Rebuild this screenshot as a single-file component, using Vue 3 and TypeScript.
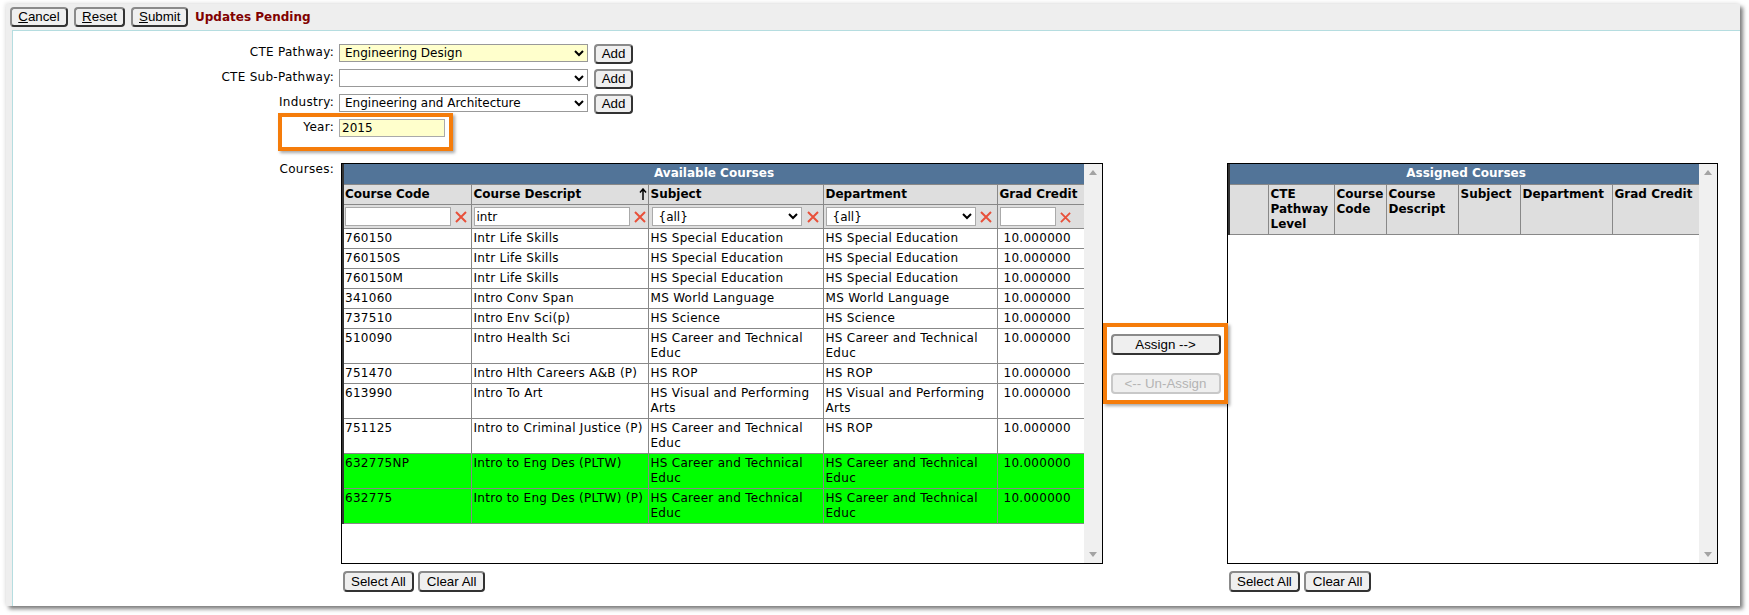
<script setup lang="ts">
interface Course {
  code: string;
  descript: string;
  subject: string;
  department: string;
  match?: boolean;
}

const courses: Course[] = [
  { code: "760150", descript: "Intr Life Skills", subject: "HS Special Education", department: "HS Special Education" },
  { code: "760150S", descript: "Intr Life Skills", subject: "HS Special Education", department: "HS Special Education" },
  { code: "760150M", descript: "Intr Life Skills", subject: "HS Special Education", department: "HS Special Education" },
  { code: "341060", descript: "Intro Conv Span", subject: "MS World Language", department: "MS World Language" },
  { code: "737510", descript: "Intro Env Sci(p)", subject: "HS Science", department: "HS Science" },
  { code: "510090", descript: "Intro Health Sci", subject: "HS Career and Technical Educ", department: "HS Career and Technical Educ" },
  { code: "751470", descript: "Intro Hlth Careers A&B (P)", subject: "HS ROP", department: "HS ROP" },
  { code: "613990", descript: "Intro To Art", subject: "HS Visual and Performing Arts", department: "HS Visual and Performing Arts" },
  { code: "751125", descript: "Intro to Criminal Justice (P)", subject: "HS Career and Technical Educ", department: "HS ROP" },
  { code: "632775NP", descript: "Intro to Eng Des (PLTW)", subject: "HS Career and Technical Educ", department: "HS Career and Technical Educ", match: true },
  { code: "632775", descript: "Intro to Eng Des (PLTW) (P)", subject: "HS Career and Technical Educ", department: "HS Career and Technical Educ", match: true },
];

const assignedCols = ["", "CTE Pathway Level", "Course Code", "Course Descript", "Subject", "Department", "Grad Credit"];
const assignedWidths = [39, 66, 52, 72, 62, 92, 90];
</script>

<template>
  <div class="page">
    <div class="frame">
      <div class="toolbar">
        <button type="button" class="btn cancel"><u>C</u>ancel</button>
        <button type="button" class="btn reset"><u>R</u>eset</button>
        <button type="button" class="btn submit"><u>S</u>ubmit</button>
        <span class="pending">Updates Pending</span>
      </div>

      <div class="panel">
        <div class="field">
          <label>CTE Pathway:</label>
          <select class="sel required"><option>Engineering Design</option></select>
          <button type="button" class="btn add">Add</button>
        </div>
        <div class="field">
          <label>CTE Sub-Pathway:</label>
          <select class="sel"><option></option></select>
          <button type="button" class="btn add">Add</button>
        </div>
        <div class="field">
          <label>Industry:</label>
          <select class="sel"><option>Engineering and Architecture</option></select>
          <button type="button" class="btn add">Add</button>
        </div>
        <div class="field">
          <div class="callout year-callout"></div>
          <label>Year:</label>
          <input class="year" type="text" value="2015" />
        </div>

        <div class="courses">
          <div class="courses-label">Courses:</div>

          <div class="listbox">
            <div class="list-scroll">
              <table class="grid avail">
                <colgroup>
                  <col style="width: 128px" />
                  <col style="width: 177px" />
                  <col style="width: 175px" />
                  <col style="width: 174px" />
                  <col style="width: 88px" />
                </colgroup>
                <thead>
                  <tr><th class="title" colspan="5">Available Courses</th></tr>
                  <tr class="heads">
                    <th>Course Code</th>
                    <th class="sorted">
                      Course Descript
                      <svg class="sort" viewBox="0 0 8 12"><path d="M4 12V1M1 4.5 4 1l3 3.5" /></svg>
                    </th>
                    <th>Subject</th>
                    <th>Department</th>
                    <th>Grad Credit</th>
                  </tr>
                  <tr class="filters">
                    <th>
                      <div class="filter">
                        <input class="f-input w106" type="text" />
                        <svg class="clear" viewBox="0 0 12 12"><path d="M1 1 11 11M11 1 1 11" /></svg>
                      </div>
                    </th>
                    <th>
                      <div class="filter">
                        <input class="f-input w156" type="text" value="intr" />
                        <svg class="clear" viewBox="0 0 12 12"><path d="M1 1 11 11M11 1 1 11" /></svg>
                      </div>
                    </th>
                    <th>
                      <div class="filter">
                        <select class="f-select subject-select"><option>{all}</option></select>
                        <svg class="clear" viewBox="0 0 12 12"><path d="M1 1 11 11M11 1 1 11" /></svg>
                      </div>
                    </th>
                    <th>
                      <div class="filter">
                        <select class="f-select"><option>{all}</option></select>
                        <svg class="clear" viewBox="0 0 12 12"><path d="M1 1 11 11M11 1 1 11" /></svg>
                      </div>
                    </th>
                    <th>
                      <div class="filter">
                        <input class="f-input w56" type="text" />
                        <svg class="clear small" viewBox="0 0 12 12"><path d="M1 1 11 11M11 1 1 11" /></svg>
                      </div>
                    </th>
                  </tr>
                </thead>
                <tbody>
                  <tr v-for="c in courses" :key="c.code" :class="{ match: c.match }">
                    <td>{{ c.code }}</td>
                    <td>{{ c.descript }}</td>
                    <td>{{ c.subject }}</td>
                    <td>{{ c.department }}</td>
                    <td class="credit">10.000000</td>
                  </tr>
                </tbody>
              </table>
            </div>
            <div class="scrollbar"><i class="up"></i><i class="down"></i></div>
          </div>

          <div class="assign-box">
            <button type="button" class="btn wide">Assign --&gt;</button>
            <button type="button" class="btn wide" disabled>&lt;-- Un-Assign</button>
          </div>

          <div class="listbox">
            <div class="list-scroll">
              <table class="grid assigned">
                <colgroup>
                  <col v-for="(w, i) in assignedWidths" :key="i" :style="{ width: w + 'px' }" />
                </colgroup>
                <thead>
                  <tr><th class="title" colspan="7">Assigned Courses</th></tr>
                  <tr class="heads">
                    <th v-for="h in assignedCols" :key="h">{{ h }}</th>
                  </tr>
                </thead>
              </table>
            </div>
            <div class="scrollbar"><i class="up"></i><i class="down"></i></div>
          </div>

          <div class="list-actions">
            <button type="button" class="btn">Select All</button>
            <button type="button" class="btn">Clear All</button>
          </div>
          <div class="list-actions right-actions">
            <button type="button" class="btn">Select All</button>
            <button type="button" class="btn">Clear All</button>
          </div>
        </div>
      </div>
    </div>
  </div>
</template>

<style>
html,
body {
  margin: 0;
  background: #fff;
}
</style>

<style scoped>
.page {
  width: 1749px;
  height: 615px;
  box-sizing: border-box;
  padding: 4px 9px 8px 6px;
  font-family: "DejaVu Sans", Verdana, sans-serif;
  font-size: 12px;
  color: #000;
  overflow: hidden;
}

.frame {
  height: 602px;
  background: #eee;
  box-shadow: 3px 3px 4px rgba(0, 0, 0, 0.5), -1px -1px 4px rgba(0, 0, 0, 0.1);
}

.toolbar {
  display: flex;
  align-items: center;
  height: 26px;
  padding-left: 4px;
  gap: 6px;
}

.pending {
  color: #800000;
  font-weight: 700;
  font-size: 12px;
  margin-left: 1px;
}

.btn {
  font-family: "Liberation Sans", Arial, sans-serif;
  font-size: 13.33px;
  color: #000;
  height: 20px;
  padding: 0 6px;
  background: #efefef;
  border: 2px solid;
  border-color: #8a8a8a #333 #333 #8a8a8a;
  border-radius: 4px;
  box-sizing: border-box;
  line-height: 1;
}

.btn:disabled {
  color: #b4b4b4;
  border-color: #c8c8c8;
}

.cancel {
  width: 58px;
}

.reset {
  width: 51px;
}

.submit {
  width: 57px;
}

.panel {
  height: 576px;
  box-sizing: border-box;
  background: #fff;
  border-left: 1px solid #b5dde0;
  border-top: 1px solid #b5dde0;
  margin-left: 6px;
  padding-top: 13px;
}

.field {
  position: relative;
  display: flex;
  align-items: flex-start;
  height: 25px;
}

.field label {
  width: 321px;
  text-align: right;
  line-height: 17px;
  margin-right: 5px;
  letter-spacing: 0.28px;
}

.sel {
  width: 249px;
  height: 18px;
  box-sizing: border-box;
  font-family: inherit;
  font-size: 12px;
  border: 1px solid #999;
  border-radius: 0;
  background: #fff;
  padding: 0 0 0 1px;
  margin: 0;
}

.required {
  background: #ffc;
}

.add {
  margin-left: 6px;
  width: 39px;
  padding: 0;
}

.year {
  width: 106px;
  height: 18px;
  box-sizing: border-box;
  font-family: inherit;
  font-size: 12px;
  border: 1px solid #aaa;
  background: #ffc;
  padding: 0 2px;
  margin: 0;
  outline: none;
}

.callout {
  position: absolute;
  box-sizing: border-box;
  border: 4px solid #f57c0a;
  box-shadow: 2px 2px 3px rgba(0, 0, 0, 0.35);
  pointer-events: none;
}

.year-callout {
  left: 265px;
  top: -6px;
  width: 175px;
  height: 38px;
}

.courses {
  display: grid;
  grid-template-columns: 328px 762px 124px 491px;
  grid-template-rows: 401px auto;
  margin-top: 19px;
}

.courses-label {
  text-align: right;
  padding-right: 7px;
  line-height: 15px;
  margin-top: -1px;
  letter-spacing: 0.28px;
}

.listbox {
  display: flex;
  box-sizing: border-box;
  border: 1px solid #000;
  overflow: hidden;
  background: #fff;
}

.list-scroll {
  flex: 1;
  min-width: 0;
}

.scrollbar {
  width: 18px;
  flex: none;
  background: #f0f0f0;
  display: flex;
  flex-direction: column;
  justify-content: space-between;
  align-items: center;
  padding: 6px 0;
}

.scrollbar i {
  width: 0;
  height: 0;
  border-left: 4px solid transparent;
  border-right: 4px solid transparent;
}

.scrollbar .up {
  border-bottom: 5px solid #a3a3a3;
}

.scrollbar .down {
  border-top: 5px solid #a3a3a3;
}

.grid {
  border-collapse: collapse;
  table-layout: fixed;
  width: 100%;
  font-size: 12px;
  line-height: 15px;
  border-left: 2px solid #333;
  border-bottom: 1px solid #333;
}

.grid th,
.grid td {
  border: 1px solid #888;
  padding: 2px;
  text-align: left;
  vertical-align: top;
  overflow: hidden;
}

.grid td {
  letter-spacing: 0.28px;
}

.avail th:first-child,
.avail td:first-child {
  padding-left: 1px;
}

.grid .title {
  background: #527498;
  color: #fff;
  text-align: center;
  height: 16px;
  border: 0;
  padding-left: 2px;
}

.heads th {
  background: #dedede;
  color: #000;
  font-weight: 700;
}

.sorted {
  position: relative;
}

.sort {
  position: absolute;
  right: 1px;
  top: 3px;
  width: 8px;
  height: 12px;
  fill: none;
  stroke: #000;
  stroke-width: 1.5;
}

.filters th {
  background: #dedede;
  padding: 2px;
  height: 19px;
}

.filter {
  display: flex;
  align-items: center;
  height: 19px;
  font-weight: 400;
}

.f-input {
  box-sizing: border-box;
  height: 19px;
  font-family: inherit;
  font-size: 12px;
  border: 1px solid #aaa;
  padding: 0 2px;
  margin: 0;
  background: #fff;
  outline: none;
}

.w106 {
  width: 106px;
}

.w156 {
  width: 156px;
}

.w56 {
  width: 56px;
}

.f-select {
  box-sizing: border-box;
  width: 150px;
  height: 19px;
  font-family: inherit;
  font-size: 12px;
  border: 1px solid #aaa;
  border-radius: 0;
  background: #fff;
  padding: 0 0 0 2px;
  margin: 0;
}

.subject-select {
  margin: 0 1px;
}

.clear {
  width: 12px;
  height: 12px;
  margin: 1px 0 0 4px;
  flex: none;
  fill: none;
  stroke: #e8503a;
  stroke-width: 2;
}

.clear.small {
  width: 11px;
  height: 11px;
  margin-left: 4px;
}

.credit {
  padding-left: 6px !important;
}

.match td {
  background: #0f0;
}

.assign-box {
  align-self: center;
  box-sizing: border-box;
  width: 125px;
  height: 81px;
  margin-right: -1px;
  position: relative;
  z-index: 1;
  border: 4px solid #f57c0a;
  box-shadow: 2px 2px 3px rgba(0, 0, 0, 0.35);
  background: #fff;
  display: flex;
  flex-direction: column;
  align-items: center;
  gap: 18px;
  padding-top: 7px;
}

.wide {
  width: 110px;
  height: 21px;
}

.list-actions {
  grid-column: 2;
  display: flex;
  gap: 4px;
  padding: 7px 0 0 2px;
}

.list-actions .btn {
  height: 21px;
}

.list-actions .btn:last-child {
  padding: 0 7px;
}

.right-actions {
  grid-column: 4;
  padding-left: 2px;
}
</style>
